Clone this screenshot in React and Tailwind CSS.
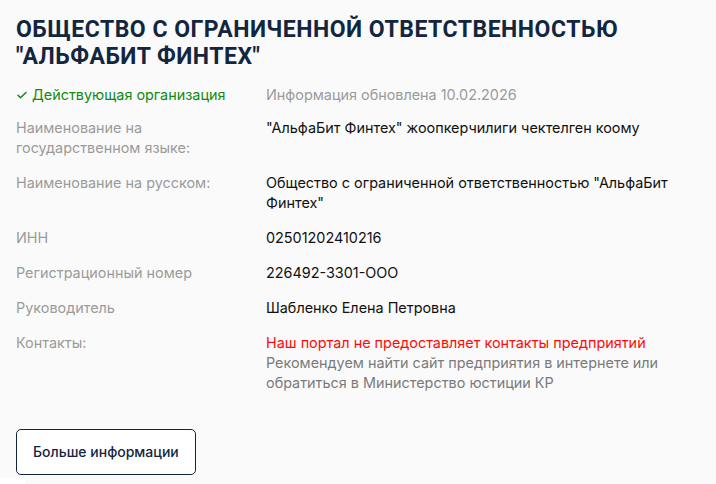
import React from "react";

const rows = [
  {
    label: "Наименование на государственном языке:",
    value: '"АльфаБит Финтех" жоопкерчилиги чектелген коому',
  },
  {
    label: "Наименование на русском:",
    value: 'Общество с ограниченной ответственностью "АльфаБит Финтех"',
  },
  { label: "ИНН", value: "02501202410216" },
  { label: "Регистрационный номер", value: "226492-3301-ООО" },
  { label: "Руководитель", value: "Шабленко Елена Петровна" },
];

const Row = ({ label, children }) => (
  <div className="flex">
    <div className="w-[250px] shrink-0 pr-6 text-[#9b9b9b]">{label}</div>
    <div className="flex-1 pr-2 text-[#111111]">{children}</div>
  </div>
);

export default function App() {
  return (
    <div className="relative min-h-[484px] w-[716px] overflow-hidden bg-[#fafafa] font-['Inter',sans-serif]">
      <div className="px-4 pt-[16px]">
        <h1 className="font-['Roboto',sans-serif] text-[23px] font-bold uppercase leading-[27px] tracking-[0.5px] text-[#12263f]">
          Общество с ограниченной ответственностью "АльфаБит Финтех"
        </h1>

        <div className="mt-[15px] flex flex-col gap-[15px] text-[14.4px] leading-5">
          <div className="-mb-[2px] flex">
            <div className="flex w-[250px] shrink-0 items-center gap-1 text-[#108a10]">
              <svg width="12" height="12" viewBox="0 0 24 24" fill="none" stroke="currentColor" strokeWidth="3" strokeLinecap="round" strokeLinejoin="round">
                <path d="M4 12.5l5 5L20 7" />
              </svg>
              <span>Действующая организация</span>
            </div>
            <div className="text-[#9b9b9b]">Информация обновлена 10.02.2026</div>
          </div>

          {rows.map((r) => (
            <Row key={r.label} label={r.label}>
              {r.value}
            </Row>
          ))}

          <Row label="Контакты:">
            <div className="text-[#ff0a0a]">Наш портал не предоставляет контакты предприятий</div>
            <div className="pr-8 text-[#7a7a7a]">
              Рекомендуем найти сайт предприятия в интернете или обратиться в Министерство юстиции КР
            </div>
          </Row>
        </div>

        <button className="mt-[36px] h-[46px] rounded-[5px] border border-[#12263f] bg-white px-4 text-sm font-medium text-[#12263f]">
          Больше информации
        </button>
      </div>
      <div className="absolute bottom-0 left-0 h-[6px] w-[25px] bg-white" />
    </div>
  );
}
